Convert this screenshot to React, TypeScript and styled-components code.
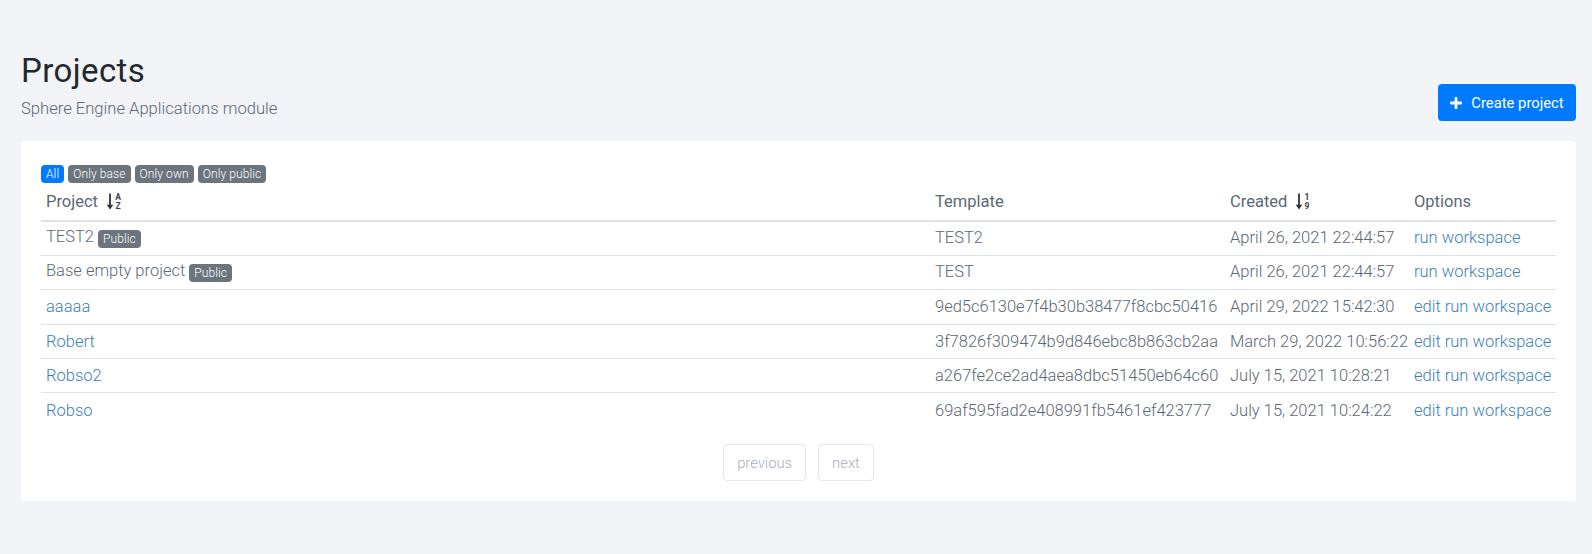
import React from "react";
import styled, { createGlobalStyle } from "styled-components";

const Global = createGlobalStyle`
  html, body { margin: 0; padding: 0; background: #f2f4f8; }
  body { font-family: Roboto, "Liberation Sans", sans-serif; font-size: 16.5px; color: #5c6873; }
  * { box-sizing: border-box; }
`;

const Page = styled.div`
  padding: 51px 16px 0 21px;
  min-height: 554px;
`;
const Header = styled.header`
  display: flex;
  justify-content: space-between;
  align-items: flex-end;
  margin-bottom: 20px;
`;
const Title = styled.h1`
  margin: 0 0 6px;
  font-size: 33px;
  line-height: 40px;
  letter-spacing: 0.4px;
  font-weight: 400;
  color: #23282c;
`;
const Subtitle = styled.p`
  margin: 0;
  font-size: 16.6px;
  line-height: 24px;
  font-weight: 300;
  color: #5c6873;
`;
const CreateButton = styled.button`
  display: inline-flex;
  align-items: center;
  justify-content: center;
  gap: 9px;
  height: 37px;
  width: 138px;
  padding: 0;
  border: 0;
  border-radius: 4px;
  background: #007bff;
  color: #fff;
  font: 400 14.8px Roboto, sans-serif;
`;
const Card = styled.section`
  background: #fff;
  border-radius: 4px;
  padding: 24px 20px 20px;
`;
const Filters = styled.div`
  display: flex;
  gap: 4px;
  height: 18px;
`;
const Filter = styled.span<{ $active?: boolean }>`
  display: inline-flex;
  align-items: center;
  height: 18px;
  padding: 0 5px;
  border-radius: 4px;
  font-size: 12px;
  font-weight: 300;
  letter-spacing: 0.1px;
  color: #fff;
  background: ${(p) => (p.$active ? "#007bff" : "#6c757d")};
`;
const Table = styled.table`
  width: 1515px;
  border-collapse: collapse;
  table-layout: fixed;
`;
const Th = styled.th<{ $w: number }>`
  width: ${(p) => p.$w}px;
  height: 38px;
  padding: 0 5px;
  text-align: left;
  font-weight: 400;
  font-size: 16.5px;
  color: #5c6873;
  border-bottom: 2px solid #dee2e6;
`;
const HeadInner = styled.span`
  display: inline-flex;
  align-items: center;
  gap: 8px;
`;
const Row = styled.tr`
  &:last-child td { border-bottom: 0; }
`;
const Td = styled.td<{ $raised?: boolean }>`
  height: 34.4px;
  padding: 0 5px ${(p) => (p.$raised ? "2px" : "0")};
  font-size: 16.5px;
  font-weight: 300;
  white-space: nowrap;
  border-bottom: 1px solid #dee2e6;
`;
const Link = styled.a`
  color: #3a7fb8;
  text-decoration: none;
`;
const Badge = styled.span`
  display: inline-block;
  margin-left: 4px;
  padding: 0 5px;
  height: 18px;
  line-height: 18px;
  border-radius: 4px;
  background: #6c757d;
  color: #fff;
  font-size: 12px;
  font-weight: 300;
  letter-spacing: 0.1px;
  vertical-align: -1px;
`;
const Pager = styled.nav`
  display: flex;
  justify-content: center;
  gap: 12px;
  margin-top: 17px;
`;
const PageButton = styled.span`
  display: inline-flex;
  align-items: center;
  height: 37px;
  padding: 0 13px;
  border: 1px solid #e4e7ea;
  border-radius: 4px;
  font-size: 14.8px;
  font-weight: 300;
  color: #a8b0ba;
`;
const SortGlyph = styled.text`
  font-family: Roboto, sans-serif;
  font-size: 8.5px;
  font-weight: 700;
  fill: #3a4248;
  text-anchor: middle;
`;

const PlusIcon = () => (
  <svg width="12" height="12" viewBox="0 0 12 12" aria-hidden="true">
    <path d="M6 1v10M1 6h10" stroke="currentColor" strokeWidth="2.8" strokeLinecap="round" fill="none" />
  </svg>
);

const SortIcon = ({ top, bottom }: { top: string; bottom: string }) => (
  <svg width="16" height="17" viewBox="0 0 16 17" aria-hidden="true">
    <path d="M3.1 0.5h1.8v11.3h2.4L4 16.5 0.7 11.8h2.4z" fill="#2f353a" />
    <SortGlyph x="12" y="7">{top}</SortGlyph>
    <SortGlyph x="12" y="16.3">{bottom}</SortGlyph>
  </svg>
);

const rows = [
  { name: "TEST2", pub: true, tpl: "TEST2", created: "April 26, 2021 22:44:57", edit: false },
  { name: "Base empty project", pub: true, tpl: "TEST", created: "April 26, 2021 22:44:57", edit: false },
  { name: "aaaaa", tpl: "9ed5c6130e7f4b30b38477f8cbc50416", created: "April 29, 2022 15:42:30", edit: true },
  { name: "Robert", tpl: "3f7826f309474b9d846ebc8b863cb2aa", created: "March 29, 2022 10:56:22", edit: true },
  { name: "Robso2", tpl: "a267fe2ce2ad4aea8dbc51450eb64c60", created: "July 15, 2021 10:28:21", edit: true },
  { name: "Robso", tpl: "69af595fad2e408991fb5461ef423777", created: "July 15, 2021 10:24:22", edit: true },
];

export default function App() {
  return (
    <Page>
      <Global />
      <Header>
        <div>
          <Title>Projects</Title>
          <Subtitle>Sphere Engine Applications module</Subtitle>
        </div>
        <CreateButton><PlusIcon /> Create project</CreateButton>
      </Header>
      <Card>
        <Filters>
          <Filter $active>All</Filter>
          <Filter>Only base</Filter>
          <Filter>Only own</Filter>
          <Filter>Only public</Filter>
        </Filters>
        <Table>
          <thead>
            <tr>
              <Th $w={889}><HeadInner>Project <SortIcon top="A" bottom="Z" /></HeadInner></Th>
              <Th $w={295}>Template</Th>
              <Th $w={184}><HeadInner>Created <SortIcon top="1" bottom="9" /></HeadInner></Th>
              <Th $w={147}>Options</Th>
            </tr>
          </thead>
          <tbody>
            {rows.map((r) => (
              <Row key={r.name}>
                <Td $raised={r.pub}>
                  {r.pub ? r.name : <Link href="#">{r.name}</Link>}
                  {r.pub && <Badge>Public</Badge>}
                </Td>
                <Td $raised={r.pub}>{r.tpl}</Td>
                <Td $raised={r.pub}>{r.created}</Td>
                <Td $raised={r.pub}>
                  {r.edit && <><Link href="#">edit</Link> </>}
                  <Link href="#">run workspace</Link>
                </Td>
              </Row>
            ))}
          </tbody>
        </Table>
        <Pager>
          <PageButton>previous</PageButton>
          <PageButton>next</PageButton>
        </Pager>
      </Card>
    </Page>
  );
}
